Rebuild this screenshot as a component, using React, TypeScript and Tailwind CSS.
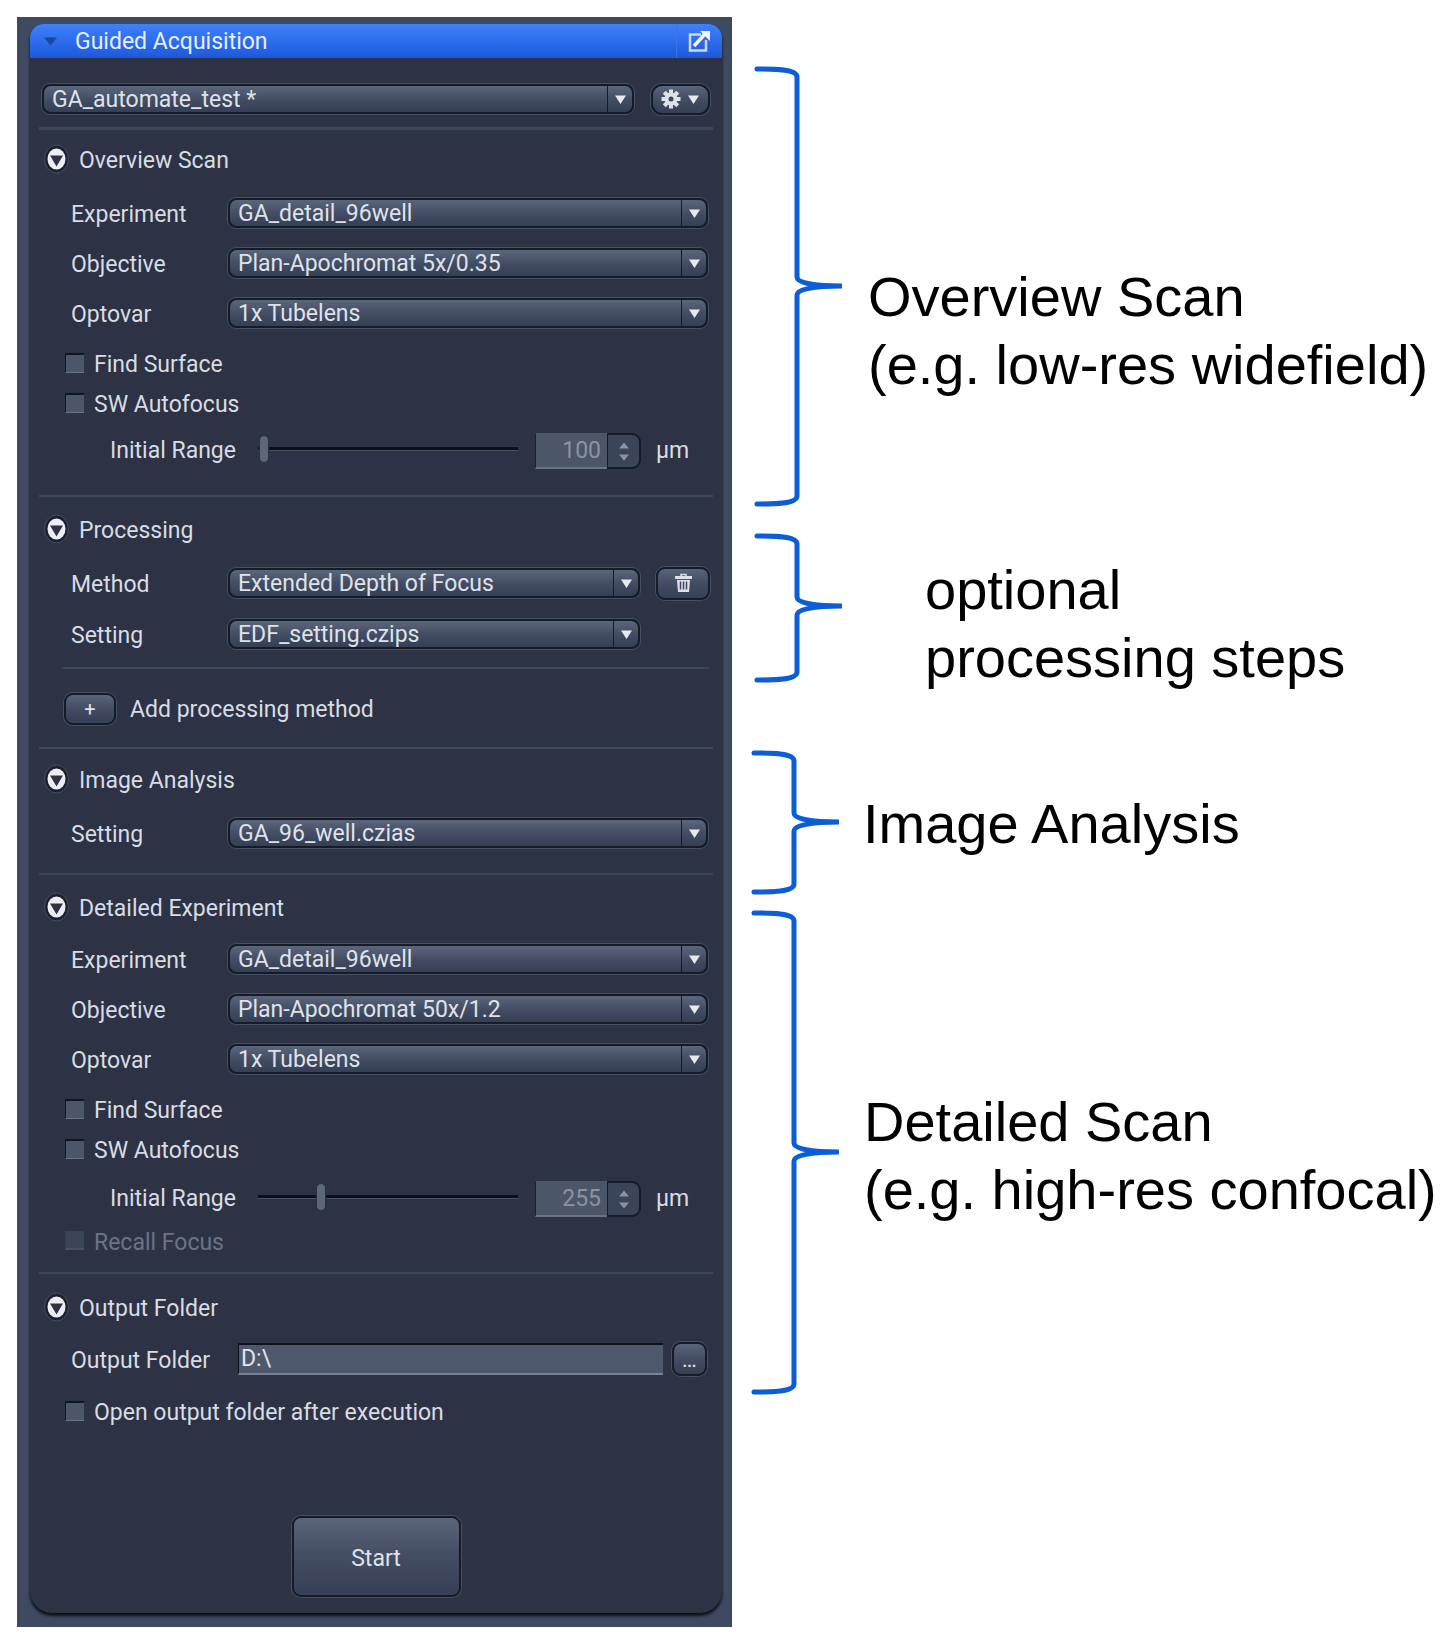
import type { ReactNode } from "react";

const uiFont = "font-['Roboto',sans-serif]";

function Caret({ className = "" }: { className?: string }) {
  return (
    <svg width="13" height="11" viewBox="0 0 13 11" className={className}>
      <path d="M1 1.5h11L6.5 10z" fill="#e6e9ef" />
    </svg>
  );
}

function GearIcon() {
  const teeth = [0, 45, 90, 135];
  return (
    <svg width="20" height="20" viewBox="0 0 20 20">
      {teeth.map((angle) => (
        <rect key={angle} x="8" y="0.5" width="4" height="19" fill="#dfe2e8" transform={`rotate(${angle} 10 10)`} />
      ))}
      <circle cx="10" cy="10" r="6.5" fill="#dfe2e8" />
      <circle cx="10" cy="10" r="2.5" fill="#3c465c" />
    </svg>
  );
}

function TrashIcon() {
  return (
    <svg width="19" height="20" viewBox="0 0 19 20" fill="none">
      <path d="M7 3V1.5h5V3" stroke="#dfe2e8" strokeWidth="1.5" />
      <rect x="1" y="3" width="17" height="3" fill="#dfe2e8" />
      <path d="M3 7h13l-1 12H4z" fill="#dfe2e8" />
      <path d="M6.5 8.5v8M9.5 8.5v8M12.5 8.5v8" stroke="#3c465c" strokeWidth="1.5" />
    </svg>
  );
}

function Select({ value, className = "w-[482px]" }: { value: string; className?: string }) {
  return (
    <div className={`flex h-[32px] items-stretch rounded-[9px] border border-[#465065] bg-[#161b28] p-[2px] ${className}`}>
      <div className="flex flex-1 items-center rounded-l-[7px] bg-gradient-to-b from-[#5c667b] via-[#434d64] to-[#343e55] pl-[8px] text-[23px] leading-none text-[#dfe2e8]">
        {value}
      </div>
      <div className="ml-[1px] flex w-[24px] items-center justify-center rounded-r-[7px] bg-gradient-to-b from-[#5c667b] via-[#434d64] to-[#343e55]">
        <Caret />
      </div>
    </div>
  );
}

function Button({ children, className = "" }: { children: ReactNode; className?: string }) {
  return (
    <div className={`flex items-center justify-center rounded-[9px] border-2 border-[#161b28] bg-gradient-to-b from-[#5a647a] via-[#424c63] to-[#363f56] text-[#dfe2e8] shadow-[0_0_0_1px_#465065] ${className}`}>
      {children}
    </div>
  );
}

function Divider({ className = "" }: { className?: string }) {
  return <div className={`h-[2px] bg-[#3b4659] ${className}`} />;
}

function Header({ title }: { title: string }) {
  return (
    <div className="flex h-[30px] items-center pl-[14px] text-[23px] text-[#d8dce4]">
      <svg width="25" height="30" viewBox="0 0 25 30">
        <ellipse cx="12.5" cy="15" rx="12" ry="14" fill="#1c2130" stroke="#465065" />
        <ellipse cx="12.5" cy="15" rx="9" ry="10.5" fill="#eceef2" />
        <path d="M6 11.5h13l-6.5 11z" fill="#2d3345" />
      </svg>
      <span className="ml-[10px] pt-[4px]">{title}</span>
    </div>
  );
}

function FieldRow({ label, children, className = "" }: { label: string; children: ReactNode; className?: string }) {
  return (
    <div className={`flex h-[50px] items-center ${className}`}>
      <span className="w-[197px] pl-[41px] pt-[4px] text-[23px] text-[#d8dce4]">{label}</span>
      {children}
    </div>
  );
}

function Check({ label, disabled = false }: { label: string; disabled?: boolean }) {
  return (
    <div className="flex h-[40px] items-center pl-[35px]">
      <div
        className={
          disabled
            ? "mb-[3px] h-[19px] w-[19px] border-t border-l border-[#3a4355] border-b-2 border-b-[#4a5366] bg-[#3b4456]"
            : "mb-[3px] h-[20px] w-[19px] border-t-2 border-l border-[#11151f] border-b border-b-[#6c7488] bg-[#4c5669]"
        }
      />
      <span className={`ml-[10px] pt-[2px] text-[23px] ${disabled ? "text-[#6b7385]" : "text-[#d8dce4]"}`}>{label}</span>
    </div>
  );
}

function RangeRow({ value, thumb, className = "" }: { value: string; thumb: string; className?: string }) {
  return (
    <div className={`flex h-[50px] items-center ${className}`}>
      <span className="w-[228px] pl-[80px] pt-[4px] text-[23px] text-[#d8dce4]">Initial Range</span>
      <div className="relative h-[4px] w-[260px] border-b border-[#4a5366] bg-[#0c0f17]">
        <div className={`absolute top-[-12px] h-[28px] w-[10px] rounded-[5px] border border-[#2a3040] bg-[#5d6779] ${thumb}`} />
      </div>
      <div className="ml-[17px] mt-[4px] flex h-[36px] items-stretch">
        <div className="flex w-[72px] items-center justify-end border-b-2 border-l border-t border-b-[#6a7285] border-l-[#1c2130] border-t-[#4c5669] bg-[#4c5669] pr-[6px] pt-[2px] text-[23px] text-[#8b92a2]">
          {value}
        </div>
        <div className="flex w-[34px] flex-col items-center justify-center gap-[5px] rounded-r-[9px] border-2 border-l border-[#161b28] bg-[#3b455a]">
          <svg width="12" height="7" viewBox="0 0 12 7"><path d="M1 6.5h10L6 .5z" fill="#8b92a2" /></svg>
          <svg width="12" height="7" viewBox="0 0 12 7"><path d="M1 .5h10L6 6.5z" fill="#8b92a2" /></svg>
        </div>
      </div>
      <span className="ml-[15px] pt-[4px] text-[23px] text-[#d8dce4]">µm</span>
    </div>
  );
}

function Panel() {
  return (
    <div className={`w-[715px] shrink-0 bg-[#3f4a61] pt-[7px] pb-[14px] pl-[13px] pr-[10px] ${uiFont}`}>
      <div className="h-[1589px] rounded-b-[22px] rounded-t-[14px] bg-[#2d3345] shadow-[0_3px_3px_#0d0f15]">
        {/* Title bar */}
        <div className="flex h-[34px] items-center rounded-t-[14px] bg-gradient-to-b from-[#3f80fb] to-[#1c58dd] pl-[14px] text-[23px] text-[#e9effc]">
          <svg width="13" height="9" viewBox="0 0 13 9"><path d="M0 .5h13L6.5 8.5z" fill="#1a479f" /></svg>
          <span className="ml-[18px] flex-1 pt-[2px]">Guided Acquisition</span>
          <div className="flex h-full w-[46px] items-center justify-start border-l border-[#3d74e4] pl-[11px]">
            <svg width="23" height="22" viewBox="0 0 23 22" fill="none">
              <path d="M13 4.5H2v16h16V10" stroke="#cfd7ea" strokeWidth="2.5" />
              <path d="M6 16 L17 4" stroke="#f2f4f8" strokeWidth="3.5" />
              <path d="M12 1h10v10z" fill="#f2f4f8" />
            </svg>
          </div>
        </div>

        {/* Profile combo */}
        <div className="mt-[25px] flex items-center pl-[11px]">
          <Select value="GA_automate_test *" className="w-[594px]" />
          <Button className="ml-[16px] h-[31px] w-[59px] gap-[6px] rounded-[11px]">
            <GearIcon />
            <Caret />
          </Button>
        </div>
        <Divider className="mx-[9px] mt-[12px] h-[3px]" />

        {/* Overview Scan */}
        <div className="pt-[14px]">
          <Header title="Overview Scan" />
          <div className="mt-[14px]">
            <FieldRow label="Experiment"><Select value="GA_detail_96well" /></FieldRow>
            <FieldRow label="Objective"><Select value="Plan-Apochromat 5x/0.35" /></FieldRow>
            <FieldRow label="Optovar"><Select value="1x Tubelens" /></FieldRow>
          </div>
          <div className="mt-[6px]">
            <Check label="Find Surface" />
            <Check label="SW Autofocus" />
          </div>
          <RangeRow value="100" thumb="left-[1px]" />
        </div>
        <Divider className="mx-[9px] mt-[21px]" />

        {/* Processing */}
        <div className="pt-[17px]">
          <Header title="Processing" />
          <div className="mt-[14px]">
            <FieldRow label="Method">
              <Select value="Extended Depth of Focus" className="w-[414px]" />
              <Button className="ml-[15px] h-[33px] w-[54px]">
                <TrashIcon />
              </Button>
            </FieldRow>
            <FieldRow label="Setting" className="mt-[1px]"><Select value="EDF_setting.czips" className="w-[414px]" /></FieldRow>
          </div>
          <Divider className="ml-[32px] mr-[13px] mt-[8px]" />
          <div className="mt-[20px] flex h-[40px] items-center pl-[34px]">
            <Button className="h-[32px] w-[52px] text-[20px]">+</Button>
            <span className="ml-[14px] pt-[2px] text-[23px] text-[#d8dce4]">Add processing method</span>
          </div>
        </div>
        <Divider className="mx-[9px] mt-[18px]" />

        {/* Image Analysis */}
        <div className="pt-[15px]">
          <Header title="Image Analysis" />
          <div className="mt-[14px]">
            <FieldRow label="Setting"><Select value="GA_96_well.czias" /></FieldRow>
          </div>
        </div>
        <Divider className="mx-[9px] mt-[15px]" />

        {/* Detailed Experiment */}
        <div className="pt-[17px]">
          <Header title="Detailed Experiment" />
          <div className="mt-[12px]">
            <FieldRow label="Experiment"><Select value="GA_detail_96well" /></FieldRow>
            <FieldRow label="Objective"><Select value="Plan-Apochromat 50x/1.2" /></FieldRow>
            <FieldRow label="Optovar"><Select value="1x Tubelens" /></FieldRow>
          </div>
          <div className="mt-[6px]">
            <Check label="Find Surface" />
            <Check label="SW Autofocus" />
          </div>
          <RangeRow value="255" thumb="left-[58px]" className="mt-[2px]" />
          <Check label="Recall Focus" disabled />
        </div>
        <Divider className="mx-[9px] mt-[10px]" />

        {/* Output Folder */}
        <div className="pt-[18px]">
          <Header title="Output Folder" />
          <div className="mt-[12px] flex h-[50px] items-center">
            <span className="w-[208px] pl-[41px] pt-[4px] text-[23px] text-[#d8dce4]">Output Folder</span>
            <div className="flex h-[32px] w-[425px] items-center border-t-2 border-l border-b-2 border-t-[#0f131c] border-l-[#0f131c] border-b-[#7a8296] bg-[#4e586c] pl-[2px] text-[23px] text-[#e0e3e9]">
              D:\
            </div>
            <Button className="ml-[9px] h-[34px] w-[35px] items-end pb-[4px] text-[16px] font-bold leading-none">...</Button>
          </div>
          <div className="mt-[8px]">
            <Check label="Open output folder after execution" />
          </div>
        </div>

        {/* Start */}
        <div className="mt-[84px] flex justify-center">
          <Button className="h-[81px] w-[169px] pt-[6px] text-[23px]">Start</Button>
        </div>
      </div>
    </div>
  );
}

function Bracket({ height, tip }: { height: number; tip: number }) {
  const bottom = height - 3;
  const d = `M3 3C20 3 43 3 43 11V${tip - 9}C43 ${tip - 3} 60 ${tip} 88 ${tip}C60 ${tip} 43 ${tip + 3} 43 ${tip + 9}V${bottom - 8}C43 ${bottom} 20 ${bottom} 3 ${bottom}`;
  return (
    <svg width="90" height={height} viewBox={`0 0 90 ${height}`} fill="none" className="shrink-0">
      <path d={d} stroke="#0b5ed7" strokeWidth="5" strokeLinecap="round" />
    </svg>
  );
}

function Note({ height, tip, className, textClass, lines }: { height: number; tip: number; className: string; textClass: string; lines: string[] }) {
  return (
    <div className={`flex ${className}`}>
      <Bracket height={height} tip={tip} />
      <div className={`whitespace-nowrap text-[56px] leading-[68px] text-black ${textClass}`}>
        {lines.map((line) => (
          <div key={line}>{line}</div>
        ))}
      </div>
    </div>
  );
}

export default function App() {
  return (
    <div className="flex h-[1642px] w-[1451px] bg-white pl-[17px] pt-[17px] font-['Liberation_Sans',Arial,sans-serif]">
      <div className="h-[1609px]">
        <Panel />
      </div>
      <div className="flex flex-col pt-[49px]">
        <Note height={441} tip={220} className="ml-[22px]" textClass="ml-[24px] mt-[197px]" lines={["Overview Scan", "(e.g. low-res widefield)"]} />
        <Note height={150} tip={73} className="ml-[22px] mt-[26px]" textClass="ml-[81px] mt-[23px]" lines={["optional", "processing steps"]} />
        <Note height={145} tip={72} className="ml-[19px] mt-[58px]" textClass="ml-[22px] mt-[40px]" lines={["Image Analysis"]} />
        <Note height={485} tip={242} className="ml-[19px] mt-[15px]" textClass="ml-[23px] mt-[178px]" lines={["Detailed Scan", "(e.g. high-res confocal)"]} />
      </div>
    </div>
  );
}
